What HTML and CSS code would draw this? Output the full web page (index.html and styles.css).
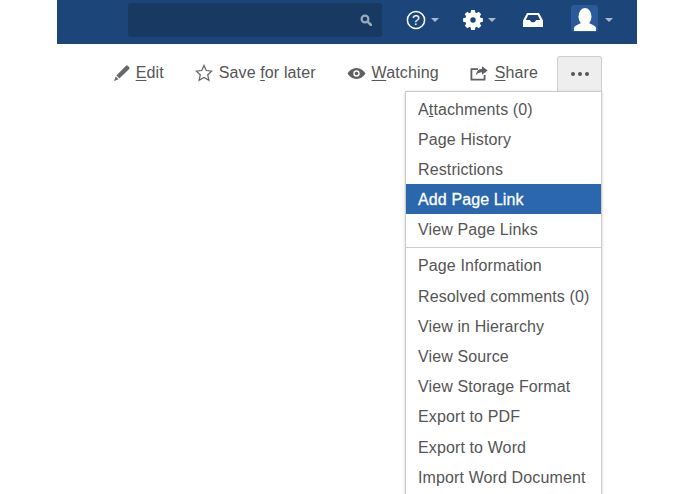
FILE: index.html
```html
<!DOCTYPE html>
<html lang="en">
<head>
<meta charset="utf-8">
<title>Page tools</title>
<link rel="stylesheet" href="styles.css">
</head>
<body>
<div class="page">
  <header class="topbar">
    <div class="search">
      <svg class="search-icon" viewBox="0 0 12 12"><circle cx="5" cy="5" r="3.4" fill="none" stroke="currentColor" stroke-width="2.2"/><path d="M7.6 7.6L11 11" stroke="currentColor" stroke-width="2.6" stroke-linecap="round"/></svg>
    </div>
    <div class="top-icons">
      <div class="top-item help">
        <svg class="ico-help" viewBox="0 0 20 20"><circle cx="10" cy="10" r="8.6" fill="none" stroke="#fff" stroke-width="1.5"/><text x="10" y="14.6" text-anchor="middle" class="help-q">?</text></svg>
        <span class="caret"></span>
      </div>
      <div class="top-item gear">
        <svg class="ico-gear" viewBox="0 0 20 20"><path fill="#fff" fill-rule="evenodd" d="M8 -1h4l.5 2.600 1.600.7 2.200-1.500 2.800 2.800-1.500 2.200.7 1.600L21 8v4l-2.600.5-.7 1.600 1.500 2.200-2.800 2.800-2.200-1.500-1.600.7L12 21H8l-.5-2.600-1.600-.7-2.200 1.500-2.800-2.800 1.500-2.200-.7-1.600L-1 12V8l2.600-.5.7-1.600-1.500-2.200 2.800-2.800 2.200 1.500 1.600-.7zM10 7a3 3 0 1 0 0 6 3 3 0 0 0 0-6z"/></svg>
        <span class="caret"></span>
      </div>
      <div class="top-item inbox">
        <svg class="ico-inbox" viewBox="0 0 20 14"><path fill="#fff" fill-rule="evenodd" d="M4 0h12l4 7.500V14H0V7.500zM5.300 2L2.800 7H7c.3 1.500 1.500 2.300 3 2.300s2.700-.8 3-2.300h4.200L14.700 2z"/></svg>
      </div>
      <div class="top-item user">
        <div class="avatar">
          <svg viewBox="0 0 27 27"><ellipse cx="14" cy="11.500" rx="6.500" ry="8.500" fill="#fff"/><path fill="#fff" d="M3 26v-3c0-2.500 5-3.500 7-5h8c2 1.500 7 2.500 7 5v3z"/></svg>
        </div>
        <span class="caret"></span>
      </div>
    </div>
  </header>

  <nav class="toolbar">
    <a class="tool edit">
      <svg class="ico ico-pencil" viewBox="0 0 16 16"><path fill="#6a6a6a" d="M12 .8c.6-.5 1.300-.5 1.800 0l1.400 1.400c.5.5.5 1.200 0 1.800L5.400 13.600 2.400 10.600zM1.700 11.400l2.900 2.900L0 16z"/></svg>
      <span><u>E</u>dit</span>
    </a>
    <a class="tool save">
      <svg class="ico ico-star" viewBox="0 0 18 18"><path fill="none" stroke="#606060" stroke-width="1.200" stroke-linejoin="miter" d="M9 1.400l2.300 5.100 5.500.6-4.100 3.700 1.200 5.500L9 13.500l-4.900 2.800 1.200-5.500-4.100-3.700 5.500-.6z"/></svg>
      <span>Save <u>f</u>or later</span>
    </a>
    <a class="tool watch">
      <svg class="ico ico-eye" viewBox="0 0 18 11"><path fill="#606060" fill-rule="evenodd" d="M9 0c3.800 0 6.900 2.400 9 5.500-2.100 3.100-5.200 5.500-9 5.500S2.100 8.600 0 5.500C2.100 2.400 5.200 0 9 0zM9 2.300a3.200 3.200 0 1 0 0 6.400 3.200 3.200 0 0 0 0-6.400z"/><circle cx="9" cy="5.500" r="1.800" fill="#606060"/></svg>
      <span><u>W</u>atching</span>
    </a>
    <a class="tool share">
      <svg class="ico ico-share" viewBox="0 0 18 15"><path fill="none" stroke="#606060" stroke-width="1.800" d="M8 3.200H1.400v10.400h13.200V9"/><path fill="#606060" d="M12 .3l5.700 4.200L12 8.700V6.200c-2.500 0-4.400.8-6 3 .4-3.800 2.700-6.200 6-6.400z"/></svg>
      <span><u>S</u>hare</span>
    </a>
    <div class="more-wrap">
      <button class="more"><i></i><i></i><i></i></button>
      <ul class="menu">
        <li><span>A<u>t</u>tachments (0)</span></li>
        <li>Page History</li>
        <li>Restrictions</li>
        <li class="active">Add Page Link</li>
        <li class="last">View Page Links</li>
        <li class="first">Page Information</li>
        <li>Resolved comments (0)</li>
        <li>View in Hierarchy</li>
        <li>View Source</li>
        <li>View Storage Format</li>
        <li class="tall">Export to PDF</li>
        <li>Export to Word</li>
        <li>Import Word Document</li>
      </ul>
    </div>
  </nav>
</div>
</body>
</html>
```
FILE: styles.css
```css
* { box-sizing: border-box; }
html, body { margin: 0; height: 100%; overflow: hidden; background: #fff; }
body { font-family: "Liberation Sans", Arial, sans-serif; color: #555555; }
.page { width: 638px; height: 100vh; overflow: hidden; padding-left: 57px; padding-right: 1px; }

.topbar { height: 44px; background: #1c4679; display: flex; align-items: flex-start; padding-left: 71px; }
.search { width: 254px; height: 34px; margin-top: 3px; background: #183a62; border-radius: 3px; display: flex; align-items: center; justify-content: flex-end; padding-right: 10px; color: #9aa9bb; }
.search-icon { width: 12px; height: 12px; }
.top-icons { display: flex; align-items: center; height: 40px; }
.top-item { display: flex; align-items: center; }
.caret { width: 0; height: 0; border-left: 4px solid transparent; border-right: 4px solid transparent; border-top: 4px solid #a9b8cc; }
.help { margin-left: 24px; }
.help .caret { margin-left: 5px; }
.ico-help { width: 20px; height: 20px; }
.help-q { font-size: 14px; fill: #fff; font-family: "Liberation Sans", sans-serif; }
.gear { margin-left: 25px; }
.gear .caret { margin-left: 6px; }
.ico-gear { width: 18px; height: 18px; overflow: visible; }
.inbox { margin-left: 27px; }
.ico-inbox { width: 20px; height: 14px; }
.user { margin-left: 28px; }
.user .caret { margin-left: 7px; }
.avatar { width: 27px; height: 27px; margin-bottom: 3px; background: #2a5a99; border-radius: 3px; }
.avatar svg { display: block; width: 27px; height: 27px; }

.toolbar { display: flex; justify-content: flex-end; align-items: flex-start; padding: 12px 35px 0 0; font-size: 16px; letter-spacing: .12px; }
.tool { display: flex; align-items: center; height: 34px; }
.tool u { text-underline-offset: 2px; }
.ico { display: block; }
.ico-pencil { width: 16px; height: 16px; margin-right: 6px; }
.edit { margin-right: 31px; }
.ico-star { width: 18px; height: 18px; margin-right: 6px; }
.save { margin-right: 31px; }
.ico-eye { width: 19px; height: 11px; margin-right: 6px; }
.watch { margin-right: 31px; }
.ico-share { width: 18px; height: 15px; margin-right: 7px; }
.share { margin-right: 19px; }

.more-wrap { position: relative; width: 45px; }
.more { width: 45px; height: 35px; padding: 0; display: flex; align-items: center; justify-content: center; gap: 3px; background: #eeeeee; border: 1px solid #cfcfcf; border-bottom: 0; border-radius: 3px 3px 0 0; }
.more i { width: 4px; height: 4px; border-radius: 50%; background: #555555; }
.menu { position: absolute; top: 35px; right: 0; width: 197px; margin: 0; padding: 2px 0 30px; list-style: none; background: #fff; border: 1px solid #cccccc; box-shadow: 0 1px 3px rgba(0,0,0,.2); font-size: 16px; line-height: 32px; white-space: nowrap; }
.menu li { height: 30px; padding-left: 12px; }
.menu li.active { background: #2a67ac; color: #fff; -webkit-text-stroke: 0.3px #fff; }
.menu li.last { height: 34px; border-bottom: 1px solid #cccccc; }
.menu li.first { margin-top: 2px; height: 31px; }
.menu li.tall { height: 31px; }
```
